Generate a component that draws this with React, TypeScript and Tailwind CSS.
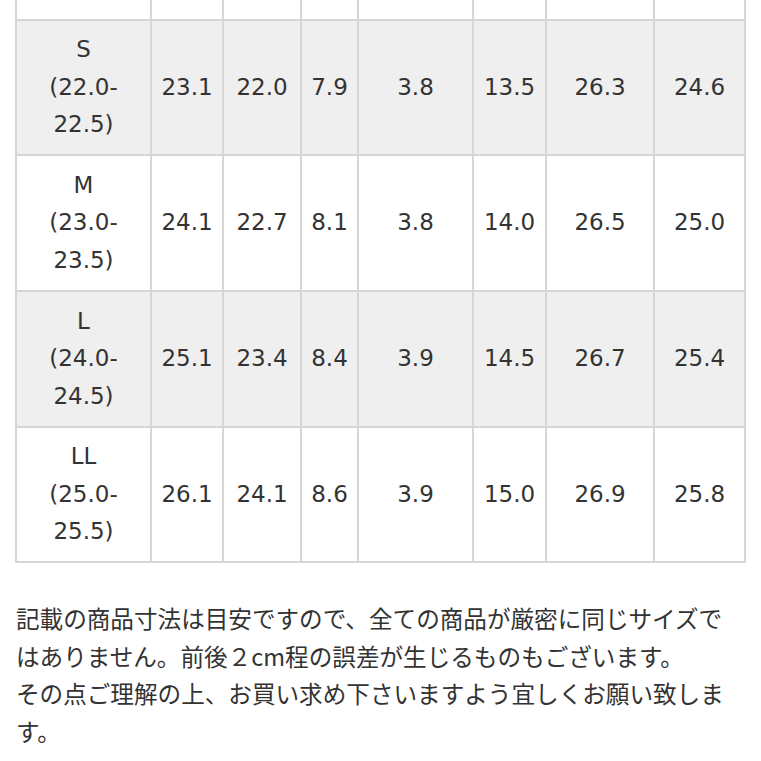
const rows = [
  { size: "SS", range: ["(21.5-", "22.0)"], values: ["22.6", "21.6", "7.7", "3.7", "13.0", "26.1", "24.2"], shaded: false },
  { size: "S", range: ["(22.0-", "22.5)"], values: ["23.1", "22.0", "7.9", "3.8", "13.5", "26.3", "24.6"], shaded: true },
  { size: "M", range: ["(23.0-", "23.5)"], values: ["24.1", "22.7", "8.1", "3.8", "14.0", "26.5", "25.0"], shaded: false },
  { size: "L", range: ["(24.0-", "24.5)"], values: ["25.1", "23.4", "8.4", "3.9", "14.5", "26.7", "25.4"], shaded: true },
  { size: "LL", range: ["(25.0-", "25.5)"], values: ["26.1", "24.1", "8.6", "3.9", "15.0", "26.9", "25.8"], shaded: false },
];

const colWidths = [135, 72, 78, 57, 115, 73, 108, 91];

export default function App() {
  return (
    <div className="h-[761px] w-[761px] overflow-hidden bg-white px-[15px] text-[#333] [font-family:'DejaVu_Sans','Noto_Sans_CJK_JP',sans-serif]">
      {/* size chart, first row scrolled mostly out of view */}
      <table className="mt-[-117px] w-[730px] table-fixed border-collapse text-center text-[23px] leading-[37.5px]">
        <colgroup>
          {colWidths.map((w, i) => (
            <col key={i} style={{ width: w }} />
          ))}
        </colgroup>
        <tbody>
          {rows.map((row) => (
            <tr key={row.size} className={row.shaded ? "bg-[#efefef]" : "bg-white"}>
              <td className="h-[135.7px] border-2 border-[#d6d6d6] p-0">
                <div>{row.size}</div>
                <div>{row.range[0]}</div>
                <div>{row.range[1]}</div>
              </td>
              {row.values.map((v, i) => (
                <td key={i} className="h-[135.7px] border-2 border-[#d6d6d6] p-0">
                  {v}
                </td>
              ))}
            </tr>
          ))}
        </tbody>
      </table>

      <p className="mt-[37px] w-[725px] pl-px text-[23.6px] leading-[37.5px] [font-family:'Noto_Sans_CJK_JP',sans-serif]">
        記載の商品寸法は目安ですので、全ての商品が厳密に同じサイズではありません。前後２cm程の誤差が生じるものもございます。
        <br />
        その点ご理解の上、お買い求め下さいますよう宜しくお願い致します。
      </p>
    </div>
  );
}
